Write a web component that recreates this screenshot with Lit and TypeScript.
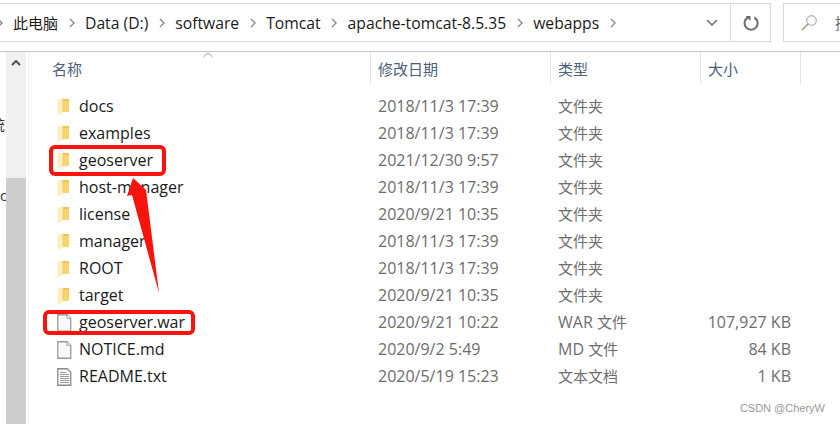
import { LitElement, css, html, svg } from 'lit'
import { customElement } from 'lit/decorators.js'

type Row = { name: string; date: string; type: string; size?: string; icon: 'folder' | 'file' | 'text' }

const crumbs = ['此电脑', 'Data (D:)', 'software', 'Tomcat', 'apache-tomcat-8.5.35', 'webapps']
const columns = ['名称', '修改日期', '类型', '大小']

const rows: Row[] = [
  { name: 'docs', date: '2018/11/3 17:39', type: '文件夹', icon: 'folder' },
  { name: 'examples', date: '2018/11/3 17:39', type: '文件夹', icon: 'folder' },
  { name: 'geoserver', date: '2021/12/30 9:57', type: '文件夹', icon: 'folder' },
  { name: 'host-manager', date: '2018/11/3 17:39', type: '文件夹', icon: 'folder' },
  { name: 'license', date: '2020/9/21 10:35', type: '文件夹', icon: 'folder' },
  { name: 'manager', date: '2018/11/3 17:39', type: '文件夹', icon: 'folder' },
  { name: 'ROOT', date: '2018/11/3 17:39', type: '文件夹', icon: 'folder' },
  { name: 'target', date: '2020/9/21 10:35', type: '文件夹', icon: 'folder' },
  { name: 'geoserver.war', date: '2020/9/21 10:22', type: 'WAR 文件', size: '107,927 KB', icon: 'file' },
  { name: 'NOTICE.md', date: '2020/9/2 5:49', type: 'MD 文件', size: '84 KB', icon: 'file' },
  { name: 'README.txt', date: '2020/5/19 15:23', type: '文本文档', size: '1 KB', icon: 'text' },
]

const chevron = html`<svg class="chevron" width="6" height="10" viewBox="0 0 6 10">
  <path d="M1 1l4 4-4 4" fill="none" stroke="#8a8a8a" stroke-width="1.4" />
</svg>`

const icons = {
  folder: svg`<path d="M6 1h6v13H6z" fill="#f6d56c" />
    <path d="M6 1h6v2H6z" fill="#eec45a" />
    <path d="M0.500 1.500L6 .5v14l-4.500 2.500-1-.5z" fill="#fcefbd" />
    <path d="M6 .5v14" stroke="#e9c766" stroke-width=".6" />`,
  file: svg`<path d="M.75 .75h9.500l3.500 3.500v13h-13z" fill="#f8f9fa" stroke="#9b9b9b" stroke-width="1.300" />
    <path d="M10 .75v3.500h3.750" fill="#fff" stroke="#9b9b9b" />`,
  text: svg`<path d="M.75 .75h9.500l3.500 3.500v13h-13z" fill="#f8f9fa" stroke="#8c8c8c" stroke-width="1.300" />
    <path d="M3 4.500h6M3 6.500h9M3 8.500h9M3 10.500h9M3 12.500h9M3 14.500h9" stroke="#9a9a9a" />`,
}

// CJK runs sit a pixel smaller than the latin text around them
const mixed = (text: string) =>
  text.split(/([\u4e00-\u9fff]+)/).map((part, i) => (i % 2 ? html`<span class="cjk">${part}</span>` : part))

@customElement('app-root')
export class AppRoot extends LitElement {
  static override styles = css`
    :host {
      display: block;
      position: relative;
      width: 840px;
      height: 424px;
      overflow: hidden;
      background: #fff;
      font-family: 'Open Sans', 'Noto Sans CJK SC', sans-serif;
      font-size: 16px;
      color: #1a1a1a;
    }

    .cjk {
      font-size: 15px;
    }

    .toolbar {
      display: flex;
      height: 52px;
      box-sizing: border-box;
      padding-top: 3px;
      border-bottom: 1px solid #c9c9c9;
    }

    .address {
      display: flex;
      flex-shrink: 0;
      align-items: center;
      width: 771px;
      height: 39px;
      box-sizing: border-box;
      border: 1px solid #d9d9d9;
      border-left: none;
      overflow: hidden;
    }

    .crumbs {
      display: flex;
      flex: 1;
      align-items: center;
      gap: 10.5px;
      margin-left: -3.5px;
      font-size: 15.7px;
      white-space: nowrap;
    }

    .chevron {
      flex-shrink: 0;
    }

    .drop,
    .refresh {
      display: flex;
      align-items: center;
      justify-content: center;
      height: 100%;
    }

    .drop {
      width: 39px;
      padding-left: 3px;
      box-sizing: border-box;
    }

    .refresh {
      width: 39px;
      border-left: 1px solid #d9d9d9;
    }

    .search {
      display: flex;
      align-items: center;
      gap: 18px;
      flex: 1;
      height: 39px;
      box-sizing: border-box;
      margin-left: 12px;
      padding-left: 17px;
      border: 1px solid #d9d9d9;
      border-right: none;
      color: #6d6d6d;
      overflow: hidden;
      white-space: nowrap;
    }

    .search svg {
      flex-shrink: 0;
    }

    .body {
      display: flex;
      height: 372px;
    }

    .side {
      display: flex;
      flex-direction: column;
      width: 6px;
      overflow: hidden;
      font-size: 14px;
      line-height: 16px;
      color: #333;
      white-space: nowrap;
    }

    .side .glyph {
      margin: 65px 0 0 -9px;
    }

    .side .letter {
      margin-top: 55px;
    }

    .scrollbar {
      display: flex;
      flex-direction: column;
      width: 20px;
      background: #f0f0f0;
    }

    .arrow {
      display: flex;
      justify-content: center;
      height: 20px;
      padding-top: 8px;
      box-sizing: border-box;
    }

    .track {
      height: 106px;
    }

    .thumb {
      flex: 1;
      background: #cdcdcd;
    }

    .list {
      flex: 1;
      margin-left: 2px;
      padding-left: 23px;
      border-left: 1px solid #f0f0f0;
    }

    .grid {
      display: grid;
      grid-template-columns: 319px 180px 150px 100px;
    }

    .head {
      position: relative;
      height: 32px;
      margin-bottom: 9px;
    }

    .head span.title {
      display: flex;
      align-items: center;
      padding-left: 7px;
      border-right: 1px solid #e5e5e5;
      color: #4c607a;
    }

    .head span.title:first-child {
      padding-left: 0;
    }

    .sort {
      position: absolute;
      top: 0;
      left: 151px;
    }

    .row {
      height: 27px;
      align-items: center;
      line-height: 27px;
      color: #6d6d6d;
    }

    .name {
      display: flex;
      align-items: center;
      gap: 7px;
      padding-left: 5px;
      color: #1a1a1a;
    }

    .col {
      padding-left: 7px;
    }

    .size {
      padding-right: 10px;
      text-align: right;
    }

    .mark {
      position: absolute;
      box-sizing: border-box;
      border: 4px solid #f8130d;
      border-radius: 6px;
    }

    .mark.folder-mark {
      left: 49px;
      top: 145px;
      width: 117px;
      height: 31px;
    }

    .mark.file-mark {
      left: 43px;
      top: 310px;
      width: 152px;
      height: 25px;
    }

    .pointer {
      position: absolute;
      left: 120px;
      top: 175px;
    }

    .watermark {
      position: absolute;
      right: 15px;
      bottom: 10px;
      font-family: 'Liberation Sans', sans-serif;
      font-size: 11px;
      color: #9a9a9a;
    }
  `

  override render() {
    return html`
      <div class="toolbar">
        <div class="address">
          <div class="crumbs">
            ${chevron}
            ${crumbs.map((c) => html`<span>${mixed(c)}</span>${chevron}`)}
          </div>
          <div class="drop">
            <svg width="12" height="8" viewBox="0 0 12 8">
              <path d="M1 1l5 5 5-5" fill="none" stroke="#6d6d6d" stroke-width="1.500" />
            </svg>
          </div>
          <div class="refresh">
            <svg width="16" height="17" viewBox="0 0 16 17">
              <path d="M5 3.500a6.500 6.500 0 1 0 6.200 0" fill="none" stroke="#6f6f6f" stroke-width="2" />
              <path d="M2.500 2h5v5z" fill="#6f6f6f" />
            </svg>
          </div>
        </div>
        <div class="search">
          <svg width="16" height="16" viewBox="0 0 16 16">
            <circle cx="10.500" cy="5.500" r="4.800" fill="none" stroke="#8d9aa8" />
            <path d="M7 9L1 15" stroke="#a08a70" stroke-width="1.200" />
          </svg>
          <span class="cjk">搜索</span>
        </div>
      </div>
      <div class="body">
        <div class="side">
          <span class="glyph">统</span>
          <span class="letter">c</span>
        </div>
        <div class="scrollbar">
          <div class="arrow">
            <svg width="10" height="6" viewBox="0 0 10 6">
              <path d="M1 5l4-4 4 4" fill="none" stroke="#505050" stroke-width="2" />
            </svg>
          </div>
          <div class="track"></div>
          <div class="thumb"></div>
        </div>
        <div class="list">
          <div class="grid head">
            ${columns.map((c) => html`<span class="title cjk">${c}</span>`)}
            <svg class="sort" width="10" height="6" viewBox="0 0 10 6">
              <path d="M.5 5L5 .8 9.500 5" fill="none" stroke="#9a9a9a" />
            </svg>
          </div>
          ${rows.map(
            (r) => html`<div class="grid row">
              <div class="name">
                <svg width="15" height="18" viewBox="0 0 15 18">${icons[r.icon]}</svg>
                <span>${r.name}</span>
              </div>
              <div class="col">${r.date}</div>
              <div class="col">${mixed(r.type)}</div>
              <div class="size">${r.size ?? ''}</div>
            </div>`,
          )}
        </div>
      </div>
      <div class="mark folder-mark"></div>
      <div class="mark file-mark"></div>
      <svg class="pointer" width="45" height="125" viewBox="0 0 45 125">
        <path d="M13 3L7 21l5-1 27 98L26 15l-1-1z" fill="#f8130d" />
      </svg>
      <div class="watermark">CSDN @CheryW</div>
    `
  }
}
